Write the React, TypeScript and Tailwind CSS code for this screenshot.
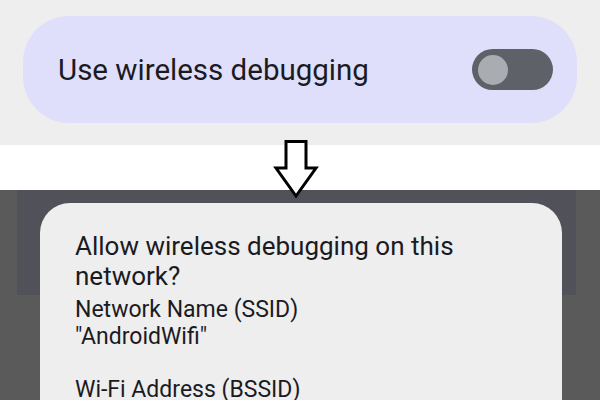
export default function App() {
  return (
    <div
      className="relative w-[600px] h-[400px] overflow-hidden flex flex-col"
      style={{ fontFamily: "Roboto, 'Noto Sans', sans-serif" }}
    >
      <div className="h-[145px] shrink-0 bg-[#eeeeee] pt-[16px] px-[23px]">
        <div className="h-[107px] rounded-[46px] bg-[#e0dffb] flex items-center justify-between pl-[35px] pr-[24px]">
          <span className="text-[29.5px] leading-[34px] text-[#1b1b1f]">Use wireless debugging</span>
          <div className="w-[81px] h-[41px] rounded-full bg-[#5e6268] flex items-center pl-[6px]">
            <div className="w-[30px] h-[30px] rounded-full bg-[#a9adb2]" />
          </div>
        </div>
      </div>
      <div className="h-[45px] shrink-0 bg-white" />
      <div className="relative h-[210px] shrink-0 bg-[#5a5a5a] pt-[13px]">
        <div className="absolute left-[17px] right-[24px] top-0 h-[105px] bg-[#515159]" />
        <div className="relative ml-[40px] w-[522px] h-[230px] rounded-[30px] bg-[#eeeeee] pl-[35px] pt-[28px] text-[#1b1b1f]">
          <div className="text-[26px] leading-[30px]">
            Allow wireless debugging on this
            <br />
            network?
          </div>
          <div className="mt-[6px] text-[23px] leading-[26.5px]">
            <div>Network Name (SSID)</div>
            <div>"AndroidWifi"</div>
            <div className="h-[26.5px]" />
            <div>Wi-Fi Address (BSSID)</div>
          </div>
        </div>
      </div>
      <svg
        className="absolute left-[270px] top-[135px]"
        width="60"
        height="70"
        viewBox="0 0 60 70"
      >
        <polygon
          points="16,6.5 36,6.5 36,33 46,33 26,61 6,33 16,33"
          fill="white"
          stroke="black"
          strokeWidth="3"
          strokeLinejoin="miter"
        />
      </svg>
    </div>
  );
}
